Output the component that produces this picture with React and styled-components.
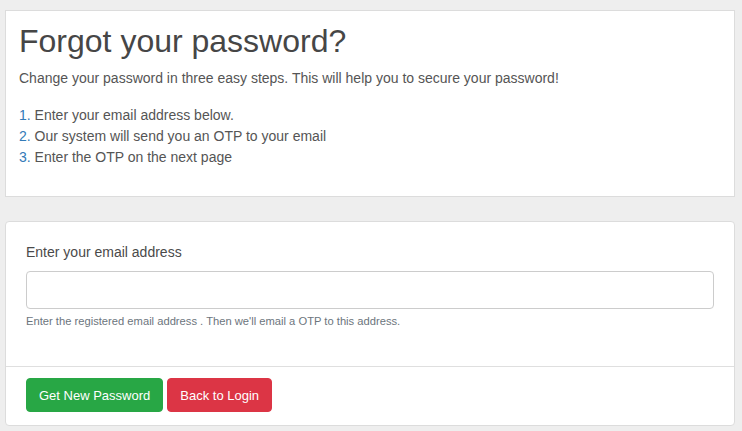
import React from "react";
import styled, { createGlobalStyle } from "styled-components";

const GlobalStyle = createGlobalStyle`
  * { box-sizing: border-box; }
  html, body {
    margin: 0;
    padding: 0;
    background: #eeeeee;
    font-family: "Liberation Sans", Arial, sans-serif;
    font-size: 14px;
    line-height: 1.5;
    color: #555;
  }
`;

const Page = styled.div`
  display: flex;
  flex-direction: column;
  gap: 24px;
  padding: 10px 7px 6px 5px;
`;

const IntroCard = styled.section`
  background: #fff;
  border: 1px solid #dcdcdc;
  padding: 11px 13px 12px;
`;

const Title = styled.h1`
  margin: 0 0 8px;
  font-size: 32px;
  font-weight: 400;
  line-height: 1.2;
  color: #464646;
`;

const Lead = styled.p`
  margin: 0 0 16px;
`;

const Steps = styled.ol`
  list-style: none;
  margin: 0 0 16px;
  padding: 0;
`;

const Step = styled.li`
  line-height: 21px;
`;

const StepNum = styled.span`
  color: #337ab7;
`;

const FormCard = styled.form`
  background: #fff;
  border: 1px solid #dcdcdc;
  border-radius: 4px;
`;

const CardBody = styled.div`
  padding: 20px 20px 20px;
`;

const FormGroup = styled.div`
  margin-bottom: 16px;
`;

const Label = styled.label`
  display: block;
  margin-bottom: 8px;
  color: #4a4a4a;
`;

const Input = styled.input`
  display: block;
  width: 100%;
  height: 38px;
  padding: 6px 12px;
  border: 1px solid #ccc;
  border-radius: 4px;
  font: inherit;
  color: #495057;
  outline: none;
`;

const Help = styled.small`
  display: block;
  margin-top: 4px;
  font-size: 11.2px;
  color: #6c757d;
`;

const CardFooter = styled.div`
  display: flex;
  gap: 4px;
  padding: 11px 20px 13px;
  border-top: 1px solid #dfdfdf;
`;

const Button = styled.button`
  height: 34px;
  padding: 0 12px;
  border: 1px solid ${(p) => p.$bg};
  border-radius: 4px;
  background: ${(p) => p.$bg};
  color: #fff;
  font-family: inherit;
  font-size: 13px;
  cursor: pointer;
`;

const steps = [
  "Enter your email address below.",
  "Our system will send you an OTP to your email",
  "Enter the OTP on the next page",
];

export default function App() {
  return (
    <>
      <GlobalStyle />
      <Page>
        <IntroCard>
          <Title>Forgot your password?</Title>
          <Lead>
            Change your password in three easy steps. This will help you to secure your password!
          </Lead>
          <Steps>
            {steps.map((s, i) => (
              <Step key={i}>
                <StepNum>{i + 1}.</StepNum> {s}
              </Step>
            ))}
          </Steps>
        </IntroCard>

        <FormCard onSubmit={(e) => e.preventDefault()}>
          <CardBody>
            <FormGroup>
              <Label htmlFor="email">Enter your email address</Label>
              <Input id="email" type="email" />
              <Help>
                Enter the registered email address . Then we'll email a OTP to this address.
              </Help>
            </FormGroup>
          </CardBody>
          <CardFooter>
            <Button type="submit" $bg="#28a745">Get New Password</Button>
            <Button type="button" $bg="#dc3545">Back to Login</Button>
          </CardFooter>
        </FormCard>
      </Page>
    </>
  );
}
